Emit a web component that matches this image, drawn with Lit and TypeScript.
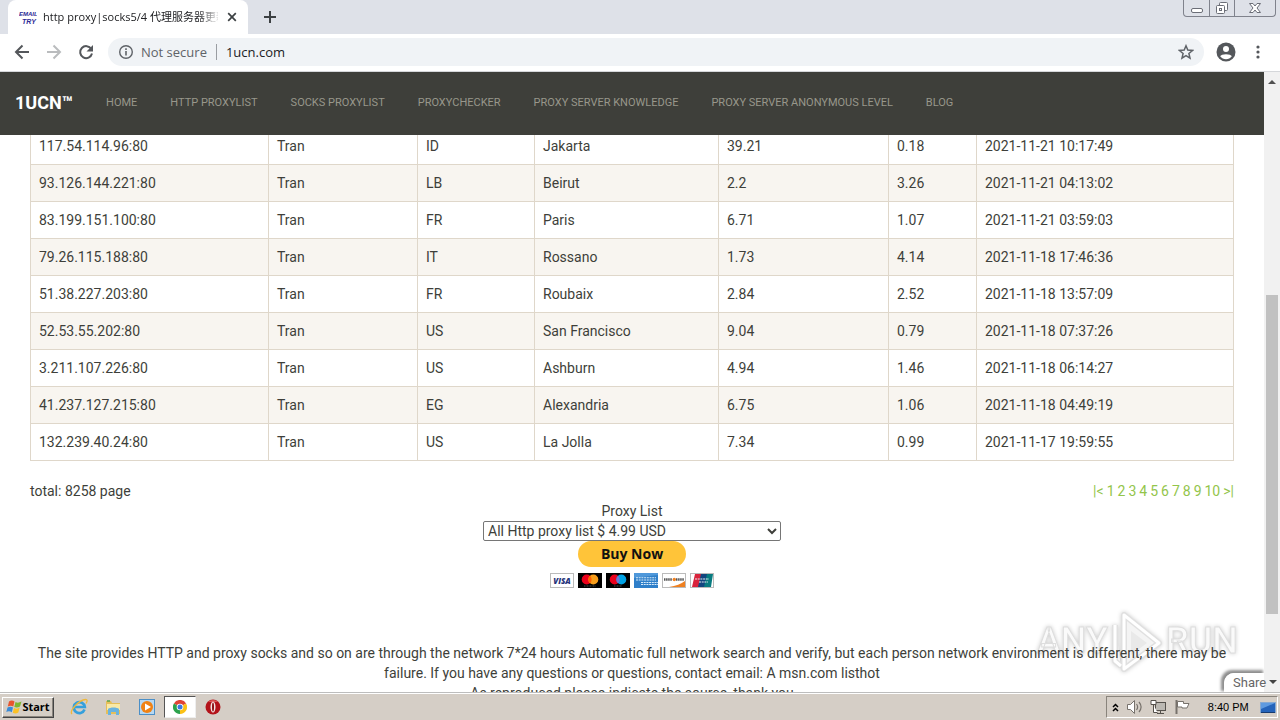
import { LitElement, html, css, svg } from "lit";
import { customElement } from "lit/decorators.js";

const LINKS: [string, string][] = [
  ["Home", "home"],
  ["HTTP Proxylist", "http"],
  ["Socks Proxylist", "socks"],
  ["ProxyChecker", "checker"],
  ["Proxy Server Knowledge", "knowledge"],
  ["Proxy Server Anonymous Level", "level"],
  ["Blog", "blog"],
];

const ROWS = [
  ["117.54.114.96:80", "Tran", "ID", "Jakarta", "39.21", "0.18", "2021-11-21 10:17:49"],
  ["93.126.144.221:80", "Tran", "LB", "Beirut", "2.2", "3.26", "2021-11-21 04:13:02"],
  ["83.199.151.100:80", "Tran", "FR", "Paris", "6.71", "1.07", "2021-11-21 03:59:03"],
  ["79.26.115.188:80", "Tran", "IT", "Rossano", "1.73", "4.14", "2021-11-18 17:46:36"],
  ["51.38.227.203:80", "Tran", "FR", "Roubaix", "2.84", "2.52", "2021-11-18 13:57:09"],
  ["52.53.55.202:80", "Tran", "US", "San Francisco", "9.04", "0.79", "2021-11-18 07:37:26"],
  ["3.211.107.226:80", "Tran", "US", "Ashburn", "4.94", "1.46", "2021-11-18 06:14:27"],
  ["41.237.127.215:80", "Tran", "EG", "Alexandria", "6.75", "1.06", "2021-11-18 04:49:19"],
  ["132.239.40.24:80", "Tran", "US", "La Jolla", "7.34", "0.99", "2021-11-17 19:59:55"],
];

const PAGES = ["|<", "1", "2", "3", "4", "5", "6", "7", "8", "9", "10", ">|"];

@customElement("browser-chrome")
class BrowserChrome extends LitElement {
  static styles = css`
    :host { display: block; background: #fff; border-bottom: 1px solid #d5d7da; font-family: "Open Sans", "Noto Sans CJK SC", sans-serif; }
    button { border: 0; background: none; padding: 0; display: flex; align-items: center; justify-content: center; flex: none; }
    svg { display: block; flex: none; }
    .strip { height: 34px; background: #dee1e8; display: flex; align-items: flex-start; }
    .tab { margin-left: 8px; width: 240px; box-sizing: border-box; height: 34px; background: #fff; border-radius: 8px 8px 0 0; display: flex; align-items: center; gap: 6px; padding: 0 8px 0 11px; }
    .title { flex: 1; font-size: 11px; line-height: 18px; white-space: nowrap; overflow: hidden; color: #202124; -webkit-mask-image: linear-gradient(90deg, #000 88%, transparent 102%); mask-image: linear-gradient(90deg, #000 88%, transparent 102%); }
    .plus { width: 28px; height: 34px; margin-left: 8px; }
    .window { margin-left: auto; margin-right: 4px; display: flex; border: 1px solid #7f828c; border-top: 0; border-radius: 0 0 4px 4px; height: 16px; }
    .window button { width: 25px; }
    .window button + button { border-left: 1px solid #7f828c; }
    .window button:last-child { width: 41px; }
    .bar { height: 36px; display: flex; align-items: center; padding: 0 12px 1px 14px; }
    .nav { display: flex; gap: 16px; }
    .omni { flex: 1; margin: 0 12px 0 14px; height: 28px; border-radius: 14px; background: #f0f3f6; display: flex; align-items: center; padding: 0 10px; gap: 7px; font-size: 13px; line-height: 18px; color: #5f6368; }
    .sep { width: 1px; height: 16px; background: #9a9da2; margin-left: 2px; }
    .omni input { flex: 1; min-width: 0; border: 0; padding: 0; margin-left: 2px; background: none; font: inherit; color: #202124; outline: 0; }
    .secure { white-space: nowrap; }
    .menu { margin-left: 12px; width: 20px; height: 20px; }
  `;

  render() {
    return html`
      <div class="strip">
        <div class="tab">
          <svg width="18" height="16" viewBox="0 0 18 16" fill="#2d2a96" font-family="Liberation Sans" font-style="italic" font-weight="700"><text x="0" y="7" font-size="6">EMAIL</text><text x="3" y="15" font-size="7">TRY</text></svg>
          <span class="title">http proxy|socks5/4 代理服务器更新</span>
          <button aria-label="Close tab"><svg width="16" height="16" viewBox="0 0 16 16"><path d="M4.200 4.200l7.600 7.600M11.800 4.200l-7.600 7.600" stroke="#3c4043" stroke-width="1.700"/></svg></button>
        </div>
        <button class="plus" aria-label="New tab"><svg width="14" height="14" viewBox="0 0 14 14"><path d="M7 1v12M1 7h12" stroke="#3c4043" stroke-width="2"/></svg></button>
        <div class="window">
          <button aria-label="Minimize"><svg width="14" height="16" viewBox="0 0 14 16"><rect x="1.500" y="8.500" width="11" height="4" rx="1.500" fill="#fff" stroke="#6b6e77"/></svg></button>
          <button aria-label="Restore"><svg width="14" height="16" viewBox="0 0 14 16"><rect x="4.500" y="2.500" width="8" height="8" rx="1" fill="#fff" stroke="#6b6e77"/><rect x="1.500" y="5.500" width="8" height="8" rx="1" fill="#fff" stroke="#6b6e77"/><rect x="4.500" y="8.500" width="2" height="2" fill="none" stroke="#6b6e77"/></svg></button>
          <button aria-label="Close"><svg width="14" height="16" viewBox="0 0 14 16"><path d="M1.500 3.500h3.500l2 2.500 2-2.500h3.500l-3.500 4.500 3.500 4.500h-3.500l-2-2.500-2 2.500h-3.500l3.500-4.500z" fill="#fff" stroke="#6b6e77"/></svg></button>
        </div>
      </div>
      <div class="bar">
        <div class="nav">
          <button aria-label="Back"><svg width="16" height="16" viewBox="0 0 16 16"><path d="M15 8H2.500M8.500 1.500L2 8l6.500 6.500" fill="none" stroke="#54575b" stroke-width="2"/></svg></button>
          <button aria-label="Forward"><svg width="16" height="16" viewBox="0 0 16 16"><path d="M1 8h12.500M7.500 1.500L14 8l-6.500 6.500" fill="none" stroke="#babcbe" stroke-width="2"/></svg></button>
          <button aria-label="Reload"><svg width="16" height="16" viewBox="0 0 16 16"><path d="M13.300 5A6 6 0 1 0 14 9.500" fill="none" stroke="#54575b" stroke-width="2"/><path d="M15 1v6.500H8.500z" fill="#54575b"/></svg></button>
        </div>
        <div class="omni">
          <svg width="16" height="16" viewBox="0 0 16 16"><circle cx="8" cy="8" r="6.300" fill="none" stroke="#5f6368" stroke-width="1.400"/><path d="M8 7v4.500M8 4.300v1.600" stroke="#5f6368" stroke-width="1.600"/></svg>
          <label class="secure" for="url">Not secure</label>
          <span class="sep"></span>
          <input id="url" value="1ucn.com" />
          <svg width="16" height="16" viewBox="0 0 16 16"><path d="M8 1.800l1.800 4.300 4.700.4-3.600 3 1.100 4.600-4-2.500-4 2.500 1.100-4.600-3.600-3 4.700-.4z" fill="none" stroke="#5f6368" stroke-width="1.500"/></svg>
        </div>
        <button aria-label="Profile"><svg width="20" height="20" viewBox="0 0 20 20"><circle cx="10" cy="10" r="9.500" fill="#54575b"/><circle cx="10" cy="7" r="3" fill="#fff"/><path d="M4.200 14.200C5 11.500 15 11.500 15.800 14.200 14.400 16.200 12.300 17.200 10 17.200S5.600 16.200 4.200 14.200z" fill="#fff"/></svg></button>
        <button class="menu" aria-label="Menu"><svg width="4" height="16" viewBox="0 0 4 16"><g fill="#54575b"><circle cx="2" cy="3" r="1.600"/><circle cx="2" cy="8" r="1.600"/><circle cx="2" cy="13" r="1.600"/></g></svg></button>
      </div>
    `;
  }
}

@customElement("proxy-page")
class ProxyPage extends LitElement {
  static styles = css`
    :host { display: flex; min-height: 0; position: relative; overflow: hidden; background: #fff; font: 14px/20px Roboto, sans-serif; color: #3e3f3a; }
    .view { flex: 1; min-width: 0; overflow: hidden; position: relative; z-index: 1; }
    nav { position: absolute; inset: 0 0 auto; z-index: 1; background: #3e3f3a; height: 63px; display: flex; align-items: center; padding: 0 15px 2px; gap: 33px; box-sizing: border-box; white-space: nowrap; }
    nav a { color: #98978b; font-size: 11px; text-transform: uppercase; text-decoration: none; }
    nav .brand { color: #fff; font-size: 18px; font-weight: 700; }
    main { padding: 55px 30px 0; }
    table { width: 100%; border-collapse: collapse; table-layout: fixed; }
    td { border: 1px solid #dfd7ca; padding: 8px; }
    tr:nth-child(even) { background: #f8f5f0; }
    .c1 { width: 238px; }
    .c2 { width: 149px; }
    .c3 { width: 117px; }
    .c4 { width: 184px; }
    .c5 { width: 170px; }
    .c6 { width: 88px; }
    .pager { display: flex; justify-content: space-between; margin-top: 20px; }
    .pages { display: flex; gap: 3px; }
    .pages a { color: #93c54b; text-decoration: none; }
    form { display: flex; flex-direction: column; align-items: center; }
    select { width: 298px; height: 20px; border: 1px solid #767676; border-radius: 2px; background: #fff; color: #3e3f3a; font: inherit; line-height: 18px; padding: 0; }
    .buy { border: 0; border-radius: 13px; background: #ffc439; width: 108px; height: 26px; font: 700 14px/26px "Open Sans", sans-serif; color: #111; padding: 0; margin-bottom: 6px; }
    .cards { display: flex; gap: 4px; }
    .cards svg { display: block; }
    .note { text-align: center; margin: 55px 0 0; }
    .scroll { width: 16px; background: #f1f1f1; display: flex; flex-direction: column; align-items: center; justify-content: space-between; box-sizing: border-box; padding-top: 7px; }
    .thumb { width: 12px; height: 319px; background: #c1c1c1; margin-bottom: 78px; }
    .scroll svg { display: block; }
    .share { position: absolute; right: 0; bottom: 0; z-index: 2; width: 56px; height: 19px; display: flex; align-items: center; gap: 3px; padding: 0 0 0 9px; box-sizing: border-box; border: 0; border-radius: 10px 0 0 0; background: linear-gradient(90deg, #fff 40px, #f1f1f1 40px); font: 13px/18px Roboto, sans-serif; color: #666; }
    .shade { position: absolute; right: 16px; bottom: 0; z-index: 1; width: 40px; height: 19px; border-radius: 10px 0 0 0; box-shadow: -2px -2px 3px 1px #8d8d8d; clip-path: inset(-8px 0 0 -8px); }
    .share svg { flex: none; }
    .mark { position: absolute; right: 44px; bottom: 16px; z-index: 0; filter: drop-shadow(0 0 2px #ccc); }
  `;

  card(name: string, art: unknown) {
    return html`<svg width="24" height="15" viewBox="0 0 24 15" role="img" aria-label=${name}>${art}</svg>`;
  }

  render() {
    return html`
      <div class="view">
        <nav>
          <a class="brand" href="#top">1UCN™</a>
          ${LINKS.map(([label, id]) => html`<a href="#${id}">${label}</a>`)}
        </nav>
        <main>
          <table>
            <colgroup><col class="c1" /><col class="c2" /><col class="c3" /><col class="c4" /><col class="c5" /><col class="c6" /><col /></colgroup>
            <tbody>${ROWS.map((r) => html`<tr>${r.map((c) => html`<td>${c}</td>`)}</tr>`)}</tbody>
          </table>
          <div class="pager">
            <span>total: 8258 page</span>
            <div class="pages">${PAGES.map((p) => html`<a href="#page">${p}</a>`)}</div>
          </div>
          <form>
            <label for="plan">Proxy List</label>
            <select id="plan"><option>All Http proxy list $ 4.99 USD</option></select>
            <button class="buy" type="button">Buy Now</button>
            <div class="cards">
              ${this.card("Visa", svg`<rect x=".5" y=".5" width="23" height="14" fill="#fff" stroke="#bbb"/><text x="12" y="10.500" text-anchor="middle" font-family="Open Sans" font-size="8" font-weight="800" font-style="italic" fill="#26337a">VISA</text>`)}
              ${this.card("Mastercard", svg`<rect width="24" height="15" fill="#000"/><circle cx="8.700" cy="6.500" r="5" fill="#eb001b"/><circle cx="15.300" cy="6.500" r="5" fill="#f79e1b"/><path d="M12 2.800a5 5 0 0 1 0 7.400 5 5 0 0 1 0-7.400" fill="#ff5f00"/><path d="M6 13h12" stroke="#888" stroke-width=".6" stroke-dasharray="1 .5"/>`)}
              ${this.card("Maestro", svg`<rect width="24" height="15" fill="#000"/><circle cx="8.700" cy="6.500" r="5" fill="#eb001b"/><circle cx="15.300" cy="6.500" r="5" fill="#00a2e5"/><path d="M12 2.800a5 5 0 0 1 0 7.400 5 5 0 0 1 0-7.400" fill="#7375cf"/><path d="M8 13h8" stroke="#888" stroke-width=".6" stroke-dasharray="1 .5"/>`)}
              ${this.card("American Express", svg`<rect width="24" height="15" fill="#2f7fc9"/><path d="M0 0h24v2L0 5z" fill="#4f98da"/><path d="M2 4.800h20M2 7h20M7 9.500h17M7 11.500h17" stroke="#d8ebfa" stroke-width="1.100" stroke-dasharray="2 .7"/>`)}
              ${this.card("Discover", svg`<rect x=".5" y=".5" width="23" height="14" fill="#fff" stroke="#bbb"/><path d="M23 8v6H7C14 13 19 11 23 8z" fill="#ef8020"/><path d="M2 6.500h8M14 6.500h8" stroke="#555" stroke-width="2.400" stroke-dasharray="1.500 .6"/><circle cx="12.300" cy="6.500" r="1.700" fill="#ef8020"/>`)}
              ${this.card("UnionPay", svg`<rect x=".5" y=".5" width="23" height="14" fill="#fff" stroke="#bbb"/><path d="M5 1h7L9 14H2z" fill="#d9233c"/><path d="M11 1h7l-3 13H8z" fill="#12457f"/><path d="M17 1h6l-2 13h-7z" fill="#087b80"/><path d="M5 6h14M9 9h9" stroke="#e6eef2" stroke-width="1.200" stroke-dasharray="2 .7"/>`)}
            </div>
          </form>
          <p class="note">
            The site provides HTTP and proxy socks and so on are through the network 7*24 hours Automatic full network search and verify, but each person network environment is different, there may be<br />
            failure. If you have any questions or questions, contact email: A msn.com listhot<br />
            As reproduced please indicate the source, thank you
          </p>
        </main>
      </div>
      <div class="scroll">
        <svg width="8" height="5" viewBox="0 0 8 5"><path d="M0 5l4-4 4 4z" fill="#505050"/></svg>
        <div class="thumb"></div>
      </div>
      <svg class="mark" width="200" height="66" viewBox="0 0 200 66">
        <g font-family="Roboto" font-size="36" font-weight="500" fill="#fafafa" stroke="#dedede"><text x="1" y="43">ANY</text><text x="130" y="43">RUN</text></g>
        <path d="M79 15v36l6 5M88 5v54l35-26zM88 5l35 28" fill="#f4f4f4" stroke="#e0e0e0" stroke-width="6" stroke-linejoin="round"/>
        <path d="M79 15v36l6 5M88 5v54l35-26zM88 5l35 28" fill="none" stroke="#fff" stroke-width="3" stroke-linejoin="round"/>
        <path d="M95 21v24l16-12z" fill="#e9e9e9"/>
      </svg>
      <div class="shade"></div>
      <button class="share">Share<svg width="8" height="5" viewBox="0 0 8 5"><path d="M0 0h8L4 4z" fill="#444"/></svg></button>
    `;
  }
}

@customElement("task-bar")
class TaskBar extends LitElement {
  static styles = css`
    :host { display: flex; align-items: center; height: 28px; padding: 1px 2px 0; background: #d5cec6; border-top: 1px solid #bdbdbd; box-shadow: inset 0 1px #fff; box-sizing: border-box; font: 11px/14px "Liberation Sans", sans-serif; }
    button { border: 0; padding: 0; background: none; display: flex; align-items: center; justify-content: center; color: #000; }
    svg { display: block; flex: none; }
    .start { width: 52px; height: 21px; gap: 0; border: 1px solid; border-color: #fff #444 #444 #fff; box-shadow: inset -1px -1px #8a857e; font: 700 11px/14px "Open Sans", sans-serif; }
    .quick { display: flex; align-items: center; margin-left: 8px; }
    .quick button { width: 34px; height: 22px; }
    .quick .active { width: 32px; background: #fff; border: 1px solid; border-color: #555 #eee #eee #555; box-sizing: border-box; }
    .tray { margin-left: auto; width: 172px; box-sizing: border-box; height: 22px; border: 1px solid; border-color: #89847c #fff #fff #89847c; display: flex; align-items: center; justify-content: space-between; padding: 0 1px 0 5px; }
    .tray time { margin-left: 10px; }
    .tray time + button { margin-left: 4px; }
  `;
  render() {
    return html`
      <button class="start">
        <svg width="16" height="16" viewBox="0 0 16 16"><path d="M3 2.500C5 1 7 1.500 8.500 2.500L7.300 7.500C5.500 6.300 3.800 6.400 1.800 7.500z" fill="#e8552d"/><path d="M9.500 3C11.500 4 13 3.800 15.500 2.500L14 7.500C12 8.700 10 8.700 8.300 8z" fill="#7db72f"/><path d="M1.500 8.500C3.500 7.400 5.500 7.400 7 8.500L5.800 13.200C4 12 2.200 12 .3 13z" fill="#3a8bd8"/><path d="M8 9C10 10 12 9.800 13.700 8.600L12.300 13.500C10.300 14.800 8.500 14.500 6.800 13.700z" fill="#fbc126"/></svg>
        Start
      </button>
      <div class="quick">
        <button aria-label="Internet Explorer"><svg width="18" height="18" viewBox="0 0 18 18"><path d="M14.500 11.500A5.500 5.500 0 1 1 14.800 9H5" fill="none" stroke="#35a0dc" stroke-width="2.700"/><path d="M2 16C-1 13 9 2 15.500 1.500c2.500 0 1.500 2.500.5 4" fill="none" stroke="#efb83a" stroke-width="1.300"/></svg></button>
        <button aria-label="Explorer"><svg width="18" height="18" viewBox="0 0 18 18"><path d="M2 3h5l1 2h8v11H2z" fill="#e5bf5a"/><path d="M3 6h13v6H3z" fill="#f9e9a6"/><path d="M4 11c2-2 9-2 11 0v6h-3v-3H7v3H4z" fill="#69b3df"/><path d="M3 3h3" stroke="#58a34c" stroke-width="1.500"/></svg></button>
        <button aria-label="Media Player"><svg width="16" height="16" viewBox="0 0 16 16"><rect x=".5" y=".5" width="15" height="15" fill="#b6d8f2" stroke="#4b8fc7"/><circle cx="8" cy="8" r="6" fill="#f08214"/><path d="M6 4.500v7l6-3.500z" fill="#fff"/></svg></button>
        <button class="active" aria-label="Chrome"><svg width="14" height="14" viewBox="0 0 14 14"><path d="M7 7L.9 3.500A7 7 0 0 1 13.100 3.500z" fill="#e04436"/><path d="M7 7V14A7 7 0 0 1 .9 3.500z" fill="#2ca24c"/><path d="M7 7l6.100-3.500A7 7 0 0 1 7 14z" fill="#fbc116"/><circle cx="7" cy="7" r="3.300" fill="#fff"/><circle cx="7" cy="7" r="2.500" fill="#3b78e0"/></svg></button>
        <button aria-label="Opera"><svg width="16" height="16" viewBox="0 0 16 16"><circle cx="8" cy="8" r="7.500" fill="#b3131a"/><path d="M3 3A7.500 7.500 0 0 1 13 3z" fill="#da5555"/><ellipse cx="8" cy="8" rx="2.500" ry="5.500" fill="#f4e6e4"/><ellipse cx="8" cy="8" rx="1" ry="4.500" fill="#8e1015"/></svg></button>
      </div>
      <div class="tray">
        <button aria-label="Show hidden icons"><svg width="7" height="9" viewBox="0 0 7 9"><path d="M1 4l2.500-2.500L6 4M1 8l2.500-2.500L6 8" fill="none" stroke="#000" stroke-width="1.500"/></svg></button>
        <button aria-label="Volume"><svg width="17" height="16" viewBox="0 0 17 16"><path d="M1.500 5.500h3l4-4v13l-4-4h-3z" fill="#fff" stroke="#77726c"/><path d="M10.500 5c1.500 2 1.500 4 0 6M13 3c2.500 3 2.500 7 0 10" fill="none" stroke="#77726c" stroke-width="1.200"/></svg></button>
        <button aria-label="Network"><svg width="16" height="16" viewBox="0 0 16 16"><rect x="5.500" y="3.500" width="10" height="8" fill="#bbb8b2" stroke="#55514c"/><path d="M7 14.500h7M10.500 12v2" stroke="#55514c"/><path d="M1 1.500h5v4H1zM3.500 6v7.500h4" fill="#fff" stroke="#55514c"/></svg></button>
        <button aria-label="Action Center"><svg width="17" height="16" viewBox="0 0 17 16"><path d="M2.500 1v14" stroke="#77726c" stroke-width="2"/><path d="M3.500 2.500h6v2h5.500l-2 4.500H8V8H3.500z" fill="#fff" stroke="#77726c"/></svg></button>
        <time>8:40 PM</time>
        <button aria-label="Show desktop"><svg width="16" height="13" viewBox="0 0 16 13"><rect x=".5" y="1.500" width="15" height="10" fill="#2463ba" stroke="#86a9d2"/><path d="M1 2h14L1 8z" fill="#5e9ae0"/><path d="M1 11.500h14" stroke="#173b70"/></svg></button>
      </div>
    `;
  }
}

@customElement("app-root")
class AppRoot extends LitElement {
  static styles = css`
    :host { display: flex; flex-direction: column; height: 100vh; overflow: hidden; }
    proxy-page { flex: 1; }
  `;
  render() {
    return html`<browser-chrome></browser-chrome><proxy-page></proxy-page><task-bar></task-bar>`;
  }
}
